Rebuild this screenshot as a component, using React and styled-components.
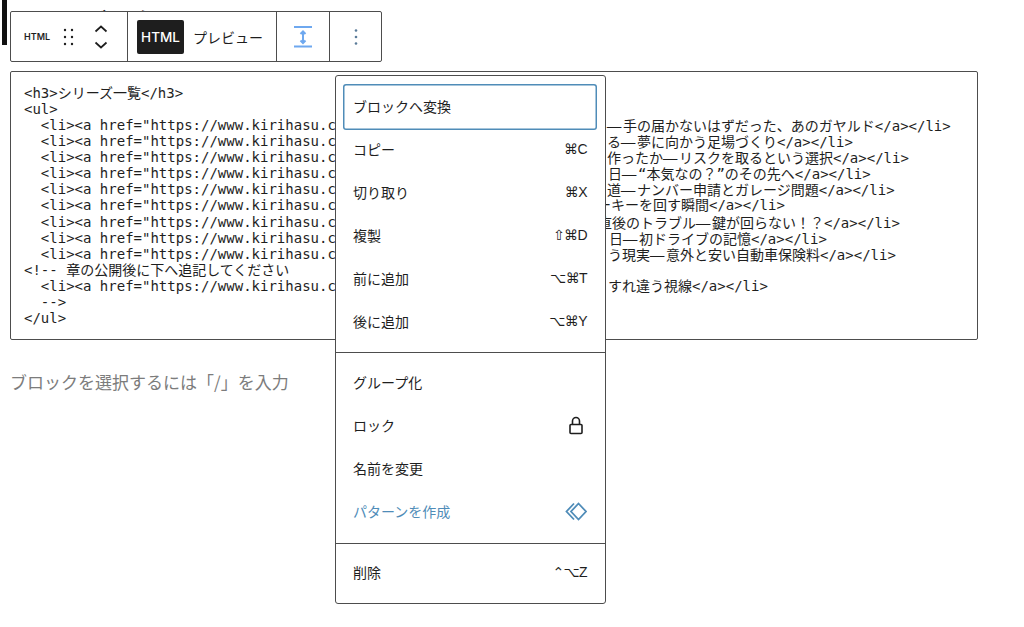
import React from "react";
import styled, { createGlobalStyle } from "styled-components";

const GlobalStyle = createGlobalStyle`
  html, body {
    margin: 0;
    background: #fff;
  }
  * {
    box-sizing: border-box;
  }
`;

const INK = "#1e1e1e";
const LINE = "#4d4d4d";
const ACCENT = "#4f8cb8";
const SANS = `"Noto Sans CJK JP", "Noto Sans", sans-serif`;
const MONO = `"DejaVu Sans Mono", "Noto Sans CJK JP", monospace`;

const Page = styled.div`
  position: relative;
  width: 1024px;
  height: 627px;
  overflow: hidden;
  padding: 0 46px 0 10px;
  font-family: ${SANS};
  color: ${INK};
`;

const Caret = styled.div`
  position: absolute;
  top: 0;
  left: 2px;
  width: 5px;
  height: 45px;
  background: #111;
`;

const Heading = styled.h3`
  margin: 0;
  height: 71px;
  padding: 3px 0 0 10px;
  font-size: 22px;
  line-height: 32px;
  font-weight: 700;
`;

const Toolbar = styled.div`
  position: absolute;
  top: 11px;
  left: 10px;
  display: flex;
  width: 372px;
  height: 51px;
  background: #fff;
  border: 1px solid ${LINE};
  border-radius: 2px;
`;

const ToolGroup = styled.div`
  display: flex;
  align-items: center;
  justify-content: ${({ $center }) => ($center ? "center" : "flex-start")};
  width: ${({ $width }) => $width}px;
  padding-left: ${({ $pad }) => $pad || 0}px;
  border-right: ${({ $last }) => ($last ? "none" : `1px solid ${LINE}`)};
`;

const BlockType = styled.span`
  width: 24px;
  margin-right: 14px;
  font-family: Inter, sans-serif;
  font-size: 9px;
  font-weight: 600;
  white-space: nowrap;
`;

const ModeOn = styled.div`
  display: flex;
  align-items: center;
  justify-content: center;
  width: 47px;
  height: 34px;
  background: ${INK};
  color: #fff;
  border-radius: 2px;
  font-family: Inter, sans-serif;
  font-size: 13.5px;
  font-weight: 500;
`;

const ModeOff = styled.div`
  margin-left: 9px;
  font-size: 14px;
  white-space: nowrap;
`;

const ToolIcon = styled.svg`
  flex: none;
  margin-left: ${({ $gap }) => $gap || 0}px;
  fill: ${({ $fill }) => $fill || "none"};
  stroke: ${({ $stroke }) => $stroke || "none"};
  stroke-width: ${({ $weight }) => $weight || 1.5};
`;

const CodeBlock = styled.div`
  padding: 13px;
  border: 1px solid ${LINE};
  border-radius: 2px;
  font-family: ${MONO};
  font-size: 14px;
  line-height: 16.07px;
  white-space: pre;
`;

const CodeLine = styled.div`
  display: flex;
  height: 16.07px;
`;

const Head = styled.span`
  flex: none;
  width: ${({ $width }) => $width}px;
  overflow: hidden;
`;

const Dash = styled.span`
  display: inline-block;
  width: 16px;
  margin-left: -1px;
  margin-right: 1px;
  font-family: "Noto Sans CJK JP", sans-serif;
  transform: scaleX(1.3);
  transform-origin: left center;
`;

const Placeholder = styled.div`
  margin-top: 30px;
  font-size: 17px;
  line-height: 24px;
  color: #7c7c7c;
`;

const Menu = styled.div`
  position: absolute;
  top: 75px;
  left: 335px;
  width: 271px;
  height: 529px;
  background: #fff;
  border: 1px solid ${LINE};
  border-radius: 3px;
`;

const MenuGroup = styled.div`
  padding: ${({ $top }) => $top}px 8px ${({ $bottom }) => $bottom}px;
  border-bottom: ${({ $last }) => ($last ? "none" : `1px solid ${LINE}`)};
`;

const MenuItem = styled.div`
  display: flex;
  align-items: center;
  justify-content: space-between;
  height: 43px;
  padding: 0 10px 0 9px;
  border-radius: 3px;
  font-size: 14px;
  color: ${({ $accent }) => ($accent ? ACCENT : INK)};
`;

// the focus ring reaches a little further down and left than the row itself
const FocusedItem = styled(MenuItem)`
  height: 46px;
  margin: 0 0 -3px -1px;
  padding: 0 10px 3px 10px;
  box-shadow: inset 0 0 0 1.5px ${ACCENT};
`;

const Shortcut = styled.span`
  font-family: "Liberation Sans", "DejaVu Sans", sans-serif;
  font-size: 14px;
  letter-spacing: -0.6px;
  color: ${INK};
`;

// tailX is where the text comes out again on the right of the menu
const LINK = `  <li><a href="https://www.kirihasu.com/">`;
const codeLines = [
  { text: "<h3>シリーズ一覧</h3>" },
  { text: "<ul>" },
  { text: LINK, tail: "—手の届かないはずだった、あのガヤルド</a></li>", tailX: 607 },
  { text: LINK, tail: "る—夢に向かう足場づくり</a></li>", tailX: 607 },
  { text: LINK, tail: "作ったか—リスクを取るという選択</a></li>", tailX: 607 },
  { text: LINK, tail: "日—“本気なの？”のその先へ</a></li>", tailX: 608 },
  { text: LINK, tail: "道—ナンバー申請とガレージ問題</a></li>", tailX: 607 },
  { text: LINK, tail: "ーキーを回す瞬間</a></li>", tailX: 597 },
  { text: LINK, tail: "直後のトラブル—鍵が回らない！？</a></li>", tailX: 598 },
  { text: LINK, tail: "日—初ドライブの記憶</a></li>", tailX: 609 },
  { text: LINK, tail: "う現実—意外と安い自動車保険料</a></li>", tailX: 608 },
  { text: "<!-- 章の公開後に下へ追記してください" },
  { text: LINK, tail: "すれ違う視線</a></li>", tailX: 608 },
  { text: "  -->" },
  { text: "</ul>" },
];

const renderTail = (tail) =>
  tail.split("—").map((part, i) => (
    <React.Fragment key={i}>
      {i > 0 && <Dash>—</Dash>}
      {part}
    </React.Fragment>
  ));

const menuGroups = [
  {
    top: 8,
    bottom: 10,
    items: [
      { label: "ブロックへ変換", focus: true },
      { label: "コピー", keys: "⌘C" },
      { label: "切り取り", keys: "⌘X" },
      { label: "複製", keys: "⇧⌘D" },
      { label: "前に追加", keys: "⌥⌘T" },
      { label: "後に追加", keys: "⌥⌘Y" },
    ],
  },
  {
    top: 7,
    bottom: 11,
    items: [
      { label: "グループ化" },
      { label: "ロック", icon: "lock" },
      { label: "名前を変更" },
      { label: "パターンを作成", icon: "pattern", accent: true },
    ],
  },
  { top: 6, bottom: 8, last: true, items: [{ label: "削除", keys: "⌃⌥Z" }] },
];

const LockIcon = () => (
  <ToolIcon width="24" height="24" viewBox="0 0 24 24" $stroke={INK} $weight={1.6}>
    <rect x="7" y="11.5" width="12" height="9" rx="1" />
    <path d="M9.5 11.5V8a3.5 3.5 0 0 1 7 0v3.5" />
  </ToolIcon>
);

const PatternIcon = () => (
  <ToolIcon width="24" height="24" viewBox="0 0 24 24" $stroke={ACCENT} $weight={1.8}>
    <path d="M15.5 4.5 23 12.5 15.5 20.5 8 12.5Z" />
    <path d="M11 4.5 3.5 12.5 11 20.5" />
  </ToolIcon>
);

const renderItem = (item) => {
  const Row = item.focus ? FocusedItem : MenuItem;
  return (
    <Row key={item.label} $accent={item.accent}>
      <span>{item.label}</span>
      {item.keys && <Shortcut>{item.keys}</Shortcut>}
      {item.icon === "lock" && <LockIcon />}
      {item.icon === "pattern" && <PatternIcon />}
    </Row>
  );
};

export default function App() {
  return (
    <Page>
      <GlobalStyle />
      <Caret />
      <Heading>シリーズ一覧</Heading>

      <Toolbar>
        <ToolGroup $width={117} $pad={13}>
          <BlockType>HTML</BlockType>
          <ToolIcon width="14" height="24" viewBox="0 0 14 24" $fill={INK}>
            <circle cx="3" cy="5" r="1.2" />
            <circle cx="10" cy="5" r="1.2" />
            <circle cx="3" cy="12" r="1.2" />
            <circle cx="10" cy="12" r="1.2" />
            <circle cx="3" cy="19" r="1.2" />
            <circle cx="10" cy="19" r="1.2" />
          </ToolIcon>
          <ToolIcon $gap={16} width="18" height="28" viewBox="0 0 18 28" $stroke={INK} $weight={1.7}>
            <path d="M3.5 8.5 9 3.5l5.5 5" />
            <path d="M3.5 19.5 9 24.5l5.5-5" />
          </ToolIcon>
        </ToolGroup>
        <ToolGroup $width={149} $pad={9}>
          <ModeOn>HTML</ModeOn>
          <ModeOff>プレビュー</ModeOff>
        </ToolGroup>
        <ToolGroup $width={53} $center>
          <ToolIcon width="24" height="24" viewBox="0 0 24 24" $stroke="#6ea8ef" $weight={2}>
            <path d="M3 2h18M3 21.5h18M12 7v10.5" />
            <path d="M9.5 9 12 6.5 14.5 9M9.5 15.5 12 18l2.5-2.5" />
          </ToolIcon>
        </ToolGroup>
        <ToolGroup $width={51} $center $last>
          <ToolIcon width="24" height="24" viewBox="0 0 24 24" $fill="#5b7c99">
            <circle cx="12" cy="5.5" r="1.3" />
            <circle cx="12" cy="12" r="1.3" />
            <circle cx="12" cy="18.5" r="1.3" />
          </ToolIcon>
        </ToolGroup>
      </Toolbar>

      <CodeBlock>
        {codeLines.map((line, i) => (
          <CodeLine key={i}>
            {line.tail ? (
              <>
                <Head $width={line.tailX - 24}>{line.text}</Head>
                <span>{renderTail(line.tail)}</span>
              </>
            ) : (
              line.text
            )}
          </CodeLine>
        ))}
      </CodeBlock>

      <Placeholder>ブロックを選択するには「/」を入力</Placeholder>

      <Menu>
        {menuGroups.map((group) => (
          <MenuGroup key={group.top} $top={group.top} $bottom={group.bottom} $last={group.last}>
            {group.items.map(renderItem)}
          </MenuGroup>
        ))}
      </Menu>
    </Page>
  );
}
